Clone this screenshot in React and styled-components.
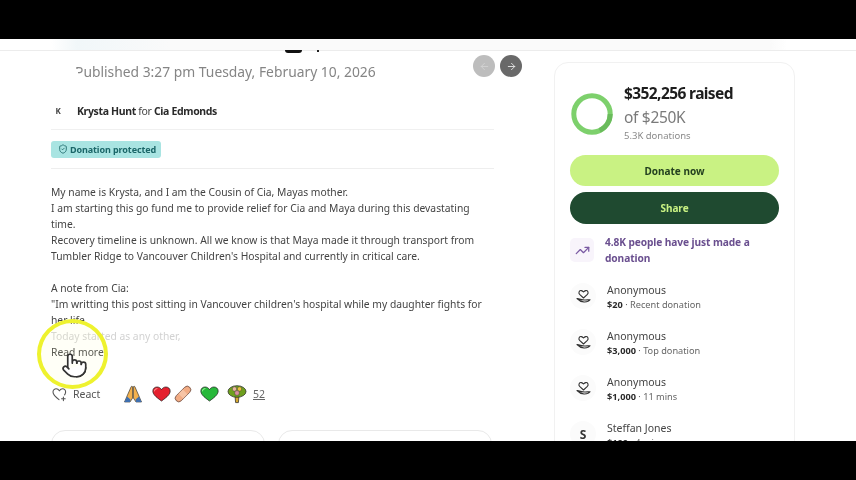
import React from 'react'
import styled, { createGlobalStyle } from 'styled-components'
import { ArrowLeft, ArrowRight, Pointer, ShieldCheck, TrendingUp } from 'lucide-react'

const GlobalStyle = createGlobalStyle`
  html, body { margin: 0; padding: 0; background: #000; }
  body { font-family: "Noto Sans", "Liberation Sans", sans-serif; }
`
const Screen = styled.div`
  width: 856px;
  height: 480px;
  background: #000;
  display: flex;
  flex-direction: column;
  justify-content: center;
  overflow: hidden;
`
const Frame = styled.div`
  height: 402px;
  background: #fff;
  position: relative;
  overflow: hidden;
  filter: blur(0.45px);
`
const TopStrip = styled.div`
  height: 11px;
  border-bottom: 1px solid #ececec;
  background: linear-gradient(90deg, #fff 6%, #f1f7f9 9%, #fafafa 20%, #fafafa 90%, #fff 92%);
`
const TitleScrap = styled.div`
  position: absolute;
  top: 11px;
  left: 285px;
  width: 17px;
  height: 2.5px;
  background: #111;
  border-radius: 0 0 9px 9px;

  &::after {
    content: '';
    position: absolute;
    left: 32px;
    top: 0;
    width: 2px;
    height: 2px;
    background: #222;
  }
`
const Main = styled.div`
  display: flex;
  padding-left: 51px;
`
const Story = styled.main`
  width: 443px;
  flex: none;
`
const PublishedRow = styled.div`
  display: flex;
  align-items: center;
  justify-content: space-between;
  height: 32px;
  margin-top: 4px;
  padding-left: 24px;
  width: 471px;
  box-sizing: border-box;
`
const Published = styled.div`
  position: relative;
  font-size: 13.85px;
  color: #858585;
  white-space: nowrap;

  &::before {
    content: '';
    position: absolute;
    left: 0;
    top: 7px;
    width: 3px;
    height: 8px;
    background: #fff;
  }
`
const Arrows = styled.div`
  display: flex;
  gap: 5px;
  margin-top: -10px;
`
const ArrowButton = styled.div`
  width: 22px;
  height: 22px;
  border-radius: 50%;
  background: ${p => (p.$dark ? '#696969' : '#bdbdbd')};
  color: ${p => (p.$dark ? '#e6e6e6' : '#d2d2d2')};
  display: flex;
  align-items: center;
  justify-content: center;
`
const AuthorRow = styled.div`
  display: flex;
  align-items: center;
  height: 37px;
  margin-top: 5px;
  border-bottom: 1px solid #f0f0f0;
  font-size: 10.5px;
  letter-spacing: -0.35px;
  color: #444;
`
const Avatar = styled.div`
  width: 14px;
  margin-right: 12px;
  text-align: center;
  font-size: 8px;
  font-weight: 700;
`
const Bold = styled.b`
  font-weight: 700;
  color: #2a2a2a;
`
const BadgeRow = styled.div`
  height: 38px;
  display: flex;
  align-items: center;
  border-bottom: 1px solid #eeeeee;
`
const Badge = styled.div`
  display: flex;
  align-items: center;
  gap: 2px;
  height: 17px;
  width: 110px;
  box-sizing: border-box;
  padding-left: 7px;
  border-radius: 3px;
  background: #a9e4e2;
  color: #1b6668;
  font-size: 9px;
  font-weight: 700;
  letter-spacing: -0.1px;
  white-space: nowrap;
`
const StoryText = styled.div`
  margin-top: 15px;
  font-size: 10.3px;
  line-height: 16px;
  color: #444;
`
const Line = styled.div`
  white-space: nowrap;
  min-height: 16px;
  color: ${p => (p.$faded ? '#d2d2d2' : 'inherit')};
`
const ReadMore = styled.div`
  font-size: 10.3px;
  line-height: 16px;
  color: #444;
`
const ReactRow = styled.div`
  display: flex;
  align-items: center;
  height: 22px;
  margin-top: 23px;
`
const ReactButton = styled.div`
  display: flex;
  align-items: center;
  gap: 6px;
  width: 71px;
  margin-left: 1px;
  font-size: 10.5px;
  color: #555;
`
const Emojis = styled.div`
  display: flex;
  align-items: center;
  gap: 6px;
`
const Emoji = styled.span`
  display: block;
  line-height: 0;
  margin-left: ${p => p.$nudge || 0}px;
`
const Count = styled.span`
  margin-left: 6px;
  font-size: 10.5px;
  color: #666;
  text-decoration: underline;
`
const Cards = styled.div`
  display: flex;
  gap: 13px;
  margin-top: 25px;
`
const MiniCard = styled.div`
  width: 214px;
  height: 40px;
  box-sizing: border-box;
  border: 1px solid #e9e9e9;
  border-radius: 14px;
`
const Side = styled.aside`
  width: 241px;
  height: 420px;
  margin-left: 60px;
  margin-top: 11px;
  box-sizing: border-box;
  border: 1px solid #f1f1f1;
  border-radius: 14px;
  padding: 18px 15px 0;
`
const Summary = styled.div`
  display: flex;
  gap: 10px;
`
const Ring = styled.svg`
  flex: none;
  margin-top: 11px;
`
const Raised = styled.div`
  font-size: 15.5px;
  line-height: 24px;
  font-weight: 700;
  color: #1d1d1d;
  letter-spacing: -0.6px;
  white-space: nowrap;
`
const Goal = styled.div`
  font-size: 15.5px;
  line-height: 24px;
  color: #7a7a7a;
  letter-spacing: -0.3px;
`
const Donations = styled.div`
  font-size: 9.5px;
  line-height: 14px;
  color: #8a8a8a;
`
const CtaButton = styled.div`
  height: ${p => (p.$dark ? '32px' : '31px')};
  margin-top: ${p => (p.$dark ? '6px' : '12px')};
  border-radius: 16px;
  display: flex;
  align-items: center;
  justify-content: center;
  font-size: 10px;
  font-weight: 700;
  background: ${p => (p.$dark ? '#1f4a30' : '#c9f283')};
  color: ${p => (p.$dark ? '#c9f283' : '#23401f')};
`
const Trending = styled.div`
  display: flex;
  gap: 11px;
  margin-top: 10px;
  font-size: 10.2px;
  line-height: 16px;
  font-weight: 700;
  letter-spacing: -0.1px;
  color: #6a4f8f;
`
const TrendIcon = styled.div`
  width: 24px;
  height: 24px;
  flex: none;
  border-radius: 5px;
  margin-top: 4px;
  background: #f8f4fb;
  color: #7a5aa3;
  display: flex;
  align-items: center;
  justify-content: center;
`
const DonorList = styled.div`
  display: flex;
  flex-direction: column;
  gap: 17px;
  margin-top: 17px;
`
const Donor = styled.div`
  display: flex;
  gap: 11px;
  height: 29px;
`
const DonorIcon = styled.div`
  width: 26px;
  height: 26px;
  flex: none;
  border-radius: 50%;
  background: #fbfbfb;
  color: #333;
  font-size: 12px;
  font-weight: 700;
  display: flex;
  align-items: center;
  justify-content: center;
`
const DonorName = styled.div`
  font-size: 10.5px;
  line-height: 15px;
  color: #444;
`
const DonorMeta = styled.div`
  font-size: 9.2px;
  line-height: 14px;
  color: #666;
  white-space: nowrap;
`
const Amount = styled.b`
  color: #2a2a2a;
`
const Spotlight = styled.div`
  position: absolute;
  left: 37px;
  top: 280px;
  width: 71px;
  height: 70px;
  box-sizing: border-box;
  border: 4px solid #eef22e;
  border-radius: 50%;
  background: rgba(255, 255, 190, 0.12);
`
const Cursor = styled.div`
  position: absolute;
  left: 61px;
  top: 313px;
  color: #333;
  line-height: 0;
`

const donors = [
  { name: 'Anonymous', amount: '$20', note: 'Recent donation' },
  { name: 'Anonymous', amount: '$3,000', note: 'Top donation' },
  { name: 'Anonymous', amount: '$1,000', note: '11 mins' },
  { name: 'Steffan Jones', amount: '$100', note: '4 mins', initial: 'S' },
]

const HandHeartIcon = () => (
  <svg width="17" height="17" viewBox="0 0 17 17" fill="none" stroke="#333" strokeWidth="1.1" strokeLinecap="round" strokeLinejoin="round">
    <path d="M8.5 10 L4.6 6.4 C3 4.6 4.4 2.2 6.4 2.6 C7.4 2.8 8 3.4 8.5 4 C9 3.4 9.7 2.8 10.7 2.6 C12.7 2.2 14 4.6 12.4 6.4 Z" />
    <path d="M2 10.5 C4 12.6 6 13.8 9 14 C11.5 14.1 14 13.4 15 11.8 C13.5 11.6 11.5 12.2 9.5 12 C7 11.8 4 11 2 10.5 Z" />
  </svg>
)

const ProgressRing = () => (
  <Ring width="44" height="44" viewBox="0 0 44 44">
    <circle cx="22" cy="22" r="18.2" fill="none" stroke="#7dd06c" strokeWidth="5" />
    <path d="M 40.2 22 A 18.2 18.2 0 0 1 29.7 38.5" fill="none" stroke="#6abb5c" strokeWidth="5" />
  </Ring>
)

const PrayEmoji = () => (
  <svg width="20" height="20" viewBox="0 0 20 20">
    <path d="M1.5 18 L4.5 11 L8 3 C8.6 1.8 9.4 2 9.6 3 L9.6 14 L7 18 Z" fill="#f3b14e" stroke="#1f1f1f" strokeWidth="0.6" />
    <path d="M18.5 18 L15.5 11 L12 3 C11.4 1.8 10.6 2 10.4 3 L10.4 14 L13 18 Z" fill="#f3b14e" stroke="#1f1f1f" strokeWidth="0.6" />
    <path d="M1.5 18 L4 12.5 L7.5 15.5 L7 18 Z M18.5 18 L16 12.5 L12.5 15.5 L13 18 Z" fill="#3e6fb0" />
  </svg>
)
const HeartEmoji = ({ color, shade }) => (
  <svg width="19" height="18" viewBox="0 0 18 18" preserveAspectRatio="none">
    <path d="M9 16 C3 11.5 .8 9 .8 6 C.8 3.4 2.8 2 4.8 2 C6.6 2 8 3 9 4.6 C10 3 11.4 2 13.2 2 C15.2 2 17.2 3.4 17.2 6 C17.2 9 15 11.5 9 16 Z" fill={color} stroke="#1f1f1f" strokeWidth="0.7" />
    <path d="M2.2 6 C2.4 4.6 3.4 3.6 4.8 3.4" fill="none" stroke={shade} strokeWidth="1" strokeLinecap="round" />
  </svg>
)
const BandageEmoji = () => (
  <svg width="20" height="20" viewBox="0 0 20 20">
    <g transform="rotate(-45 10 10)">
      <rect x="0.5" y="6.4" width="19" height="7.2" rx="3.6" fill="#f2ac84" stroke="#5d4037" strokeWidth="0.7" />
      <rect x="7" y="6.8" width="6" height="6.4" fill="#f7c4a5" />
    </g>
  </svg>
)
const BouquetEmoji = () => (
  <svg width="20" height="20" viewBox="0 0 20 20">
    <path d="M8 12 L12 12 L11.4 18.6 L8.6 18.6 Z" fill="#d6a92f" stroke="#1f1f1f" strokeWidth="0.7" />
    <ellipse cx="10" cy="7.5" rx="9" ry="5.8" fill="#6f9f1e" stroke="#1f1f1f" strokeWidth="0.7" />
    <circle cx="7.5" cy="5" r="2.2" fill="#e8b7a0" stroke="#333" strokeWidth="0.4" />
    <circle cx="12.5" cy="5" r="2.2" fill="#e9c33f" stroke="#333" strokeWidth="0.4" />
    <circle cx="10" cy="9" r="2.4" fill="#d98f9f" stroke="#333" strokeWidth="0.4" />
  </svg>
)
const ReactIcon = () => (
  <svg width="15" height="15" viewBox="0 0 15 15" fill="none" stroke="#555" strokeWidth="1.1" strokeLinecap="round" strokeLinejoin="round">
    <path d="M7 12.6 C3 9.6 1 7.6 1 5 C1 3 2.6 1.8 4.2 1.8 C5.6 1.8 6.6 2.6 7.4 3.8 C8.2 2.6 9.2 1.8 10.6 1.8 C12.4 1.8 13.8 3.2 13.6 5.2 C13.5 6.2 13.2 7 12.6 7.8" />
    <path d="M11.4 10 V13.6 M9.6 11.8 H13.2" />
  </svg>
)

const App = () => {
  return (
    <Screen>
      <GlobalStyle />
      <Frame>
        <TopStrip />
        <TitleScrap />
        <Main>
          <Story>
            <PublishedRow>
              <Published>Published 3:27 pm Tuesday, February 10, 2026</Published>
              <Arrows>
                <ArrowButton><ArrowLeft size={11} /></ArrowButton>
                <ArrowButton $dark><ArrowRight size={11} /></ArrowButton>
              </Arrows>
            </PublishedRow>
            <AuthorRow>
              <Avatar>K</Avatar>
              <span><Bold>Krysta Hunt</Bold> for <Bold>Cia Edmonds</Bold></span>
            </AuthorRow>
            <BadgeRow>
              <Badge><ShieldCheck size={10} />Donation protected</Badge>
            </BadgeRow>
            <StoryText>
              <Line>My name is Krysta, and I am the Cousin of Cia, Mayas mother.</Line>
              <Line>I am starting this go fund me to provide relief for Cia and Maya during this devastating</Line>
              <Line>time.</Line>
              <Line>Recovery timeline is unknown. All we know is that Maya made it through transport from</Line>
              <Line>Tumbler Ridge to Vancouver Children's Hospital and currently in critical care.</Line>
              <Line />
              <Line>A note from Cia:</Line>
              <Line>"Im writting this post sitting in Vancouver children's hospital while my daughter fights for</Line>
              <Line>her life.</Line>
              <Line $faded>Today started as any other,</Line>
            </StoryText>
            <ReadMore>Read more</ReadMore>
            <ReactRow>
              <ReactButton><ReactIcon />React</ReactButton>
              <Emojis>
                <Emoji><PrayEmoji /></Emoji>
                <Emoji $nudge={3}><HeartEmoji color="#e5202e" shade="#ff8a8a" /></Emoji>
                <Emoji $nudge={-4}><BandageEmoji /></Emoji>
                <Emoji $nudge={1}><HeartEmoji color="#27b83a" shade="#8ff08f" /></Emoji>
                <Emoji $nudge={2}><BouquetEmoji /></Emoji>
              </Emojis>
              <Count>52</Count>
            </ReactRow>
            <Cards>
              <MiniCard />
              <MiniCard />
            </Cards>
          </Story>
          <Side>
            <Summary>
              <ProgressRing />
              <div>
                <Raised>$352,256 raised</Raised>
                <Goal>of $250K</Goal>
                <Donations>5.3K donations</Donations>
              </div>
            </Summary>
            <CtaButton>Donate now</CtaButton>
            <CtaButton $dark>Share</CtaButton>
            <Trending>
              <TrendIcon><TrendingUp size={15} /></TrendIcon>
              <span>4.8K people have just made a donation</span>
            </Trending>
            <DonorList>
              {donors.map((d, i) => (
                <Donor key={i}>
                  <DonorIcon>{d.initial || <HandHeartIcon />}</DonorIcon>
                  <div>
                    <DonorName>{d.name}</DonorName>
                    <DonorMeta><Amount>{d.amount}</Amount> · {d.note}</DonorMeta>
                  </div>
                </Donor>
              ))}
            </DonorList>
          </Side>
        </Main>
        <Spotlight />
        <Cursor><Pointer size={27} fill="#fff" strokeWidth={1.5} /></Cursor>
      </Frame>
    </Screen>
  )
}

export default App
